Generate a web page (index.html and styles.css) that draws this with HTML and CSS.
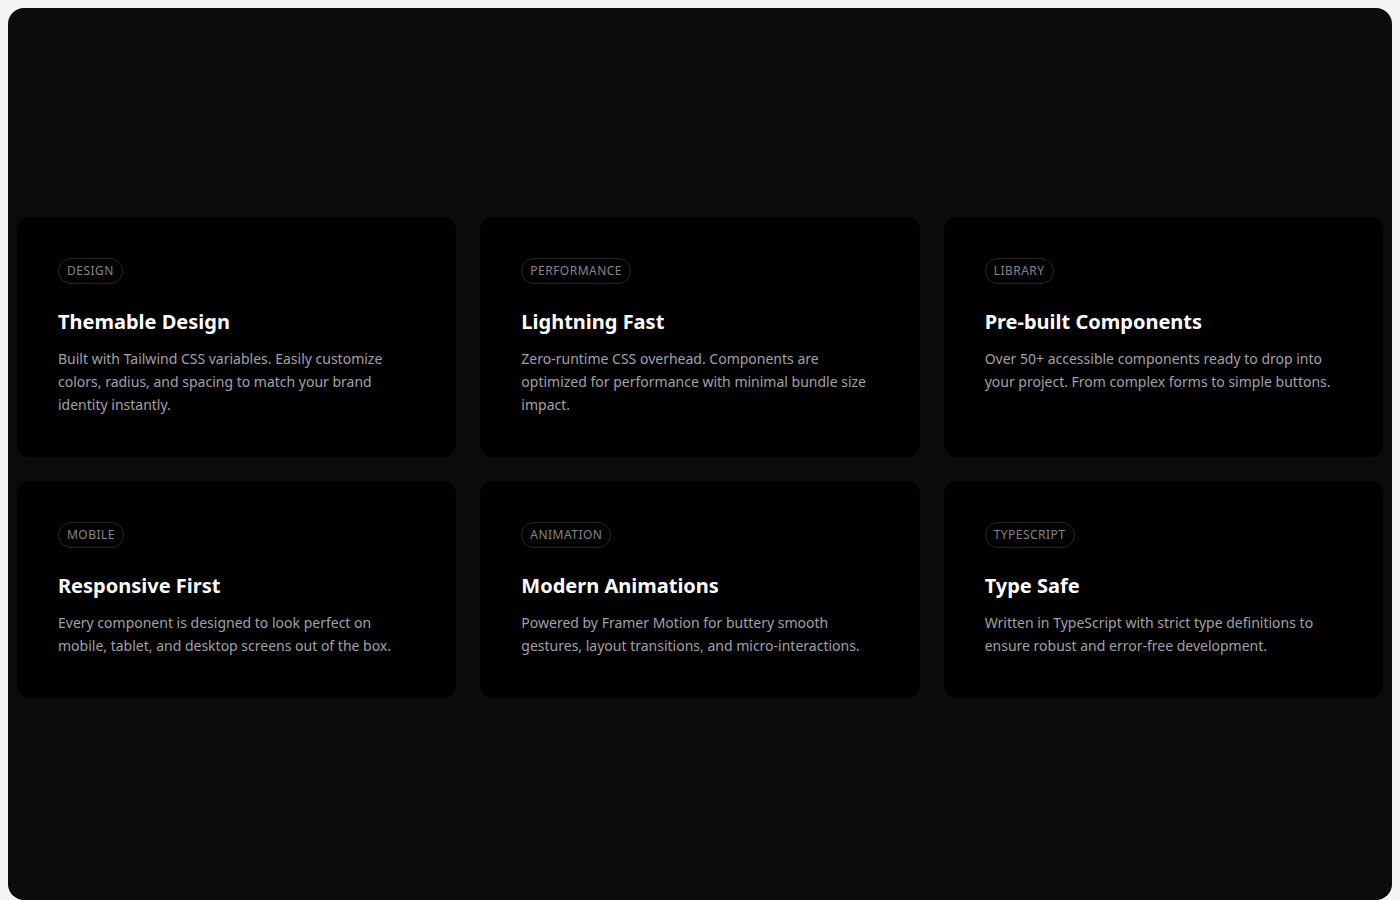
FILE: index.html
```html
<!DOCTYPE html>
<html lang="en">

<head>
  <meta charset="UTF-8">
  <meta name="viewport" content="width=device-width, initial-scale=1.0">
  <title>Features</title>
  <link rel="stylesheet" href="styles.css">
</head>

<body>
  <div class="frame">
    <div class="features">
      <div class="card">
        <span class="tag">Design</span>
        <h3>Themable Design</h3>
        <p>Built with Tailwind CSS variables. Easily customize colors, radius, and spacing to match your brand identity instantly.</p>
      </div>
      <div class="card">
        <span class="tag">Performance</span>
        <h3>Lightning Fast</h3>
        <p>Zero-runtime CSS overhead. Components are optimized for performance with minimal bundle size impact.</p>
      </div>
      <div class="card">
        <span class="tag">Library</span>
        <h3>Pre-built Components</h3>
        <p>Over 50+ accessible components ready to drop into your project. From complex forms to simple buttons.</p>
      </div>
      <div class="card">
        <span class="tag">Mobile</span>
        <h3>Responsive First</h3>
        <p>Every component is designed to look perfect on mobile, tablet, and desktop screens out of the box.</p>
      </div>
      <div class="card">
        <span class="tag">Animation</span>
        <h3>Modern Animations</h3>
        <p>Powered by Framer Motion for buttery smooth gestures, layout transitions, and micro-interactions.</p>
      </div>
      <div class="card">
        <span class="tag">TypeScript</span>
        <h3>Type Safe</h3>
        <p>Written in TypeScript with strict type definitions to ensure robust and error-free development.</p>
      </div>
    </div>
  </div>
</body>

</html>
```

FILE: styles.css
```css
* {
  margin: 0;
  padding: 0;
  box-sizing: border-box;
}

html,
body {
  height: 100%;
  overflow: hidden;
}

body {
  background-color: #f4f4f4;
  padding: 8px 8px 0;
  font-family: "Noto Sans", "Open Sans", sans-serif;
}

.frame {
  height: 892px;
  background-color: #0b0b0d;
  border-radius: 16px;
  padding: 6px 9px 0;
  display: flex;
  align-items: center;
}

.features {
  width: 100%;
  display: grid;
  grid-template-columns: repeat(3, 1fr);
  gap: 24px;

  & .card {
    background-color: #000;
    border: 1px solid #030303;
    border-radius: 12px;
    padding: 40px;
    display: flex;
    flex-direction: column;
    align-items: flex-start;
  }

  & .tag {
    font-size: 12px;
    line-height: 16px;
    text-transform: uppercase;
    letter-spacing: 0.04em;
    color: #85858c;
    border: 1px solid #26262a;
    border-radius: 999px;
    padding: 4px 8px;
    margin-bottom: 24px;
  }

  & h3 {
    font-size: 20px;
    line-height: 28px;
    font-weight: 700;
    color: #fff;
    margin-bottom: 11px;
  }

  & p {
    font-size: 14px;
    line-height: 23px;
    color: #a1a1aa;
  }
}
```
